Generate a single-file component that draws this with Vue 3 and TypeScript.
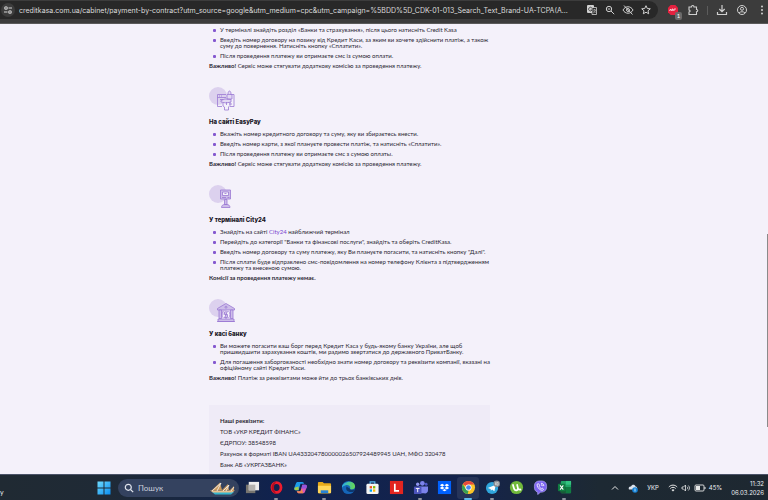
<script setup lang="ts">
interface Item {
  text: string
  link?: string
  rest?: string
}
interface Section {
  icon?: string
  title?: string
  items: Item[]
  strong: string
  note?: string
}

const address =
  'creditkasa.com.ua/cabinet/payment-by-contract?utm_source=google&utm_medium=cpc&utm_campaign=%5BDD%5D_CDK-01-013_Search_Text_Brand-UA-TCPA(A...'

const sections: Section[] = [
  {
    items: [
      { text: 'У терміналі знайдіть розділ «Банки та страхування», після цього натисніть Credit Kasa' },
      { text: 'Введіть номер договору на позику від Кредит Каси, за яким ви хочете здійснити платіж, а також\nсуму до повернення. Натисніть кнопку «Сплатити».' },
      { text: 'Після проведення платежу ви отримаєте смс із сумою оплати.' },
    ],
    strong: 'Важливо!',
    note: ' Сервіс може стягувати додаткову комісію за проведення платежу.',
  },
  {
    icon: 'online',
    title: 'На сайті EasyPay',
    items: [
      { text: 'Вкажіть номер кредитного договору та суму, яку ви збираєтесь внести.' },
      { text: 'Введіть номер карти, з якої плануєте провести платіж, та натисніть «Сплатити».' },
      { text: 'Після проведення платежу ви отримаєте смс з сумою оплаты.' },
    ],
    strong: 'Важливо!',
    note: ' Сервіс може стягувати додаткову комісію за проведення платежу.',
  },
  {
    icon: 'terminal',
    title: 'У терміналі City24',
    items: [
      { text: 'Знайдіть на сайті ', link: 'City24', rest: ' найближчий термінал' },
      { text: 'Перейдіть до категорії "Банки та фінансові послуги", знайдіть та оберіть CreditKasa.' },
      { text: 'Введіть номер договору та суму платежу, яку Ви плануєте погасити, та натисніть кнопку "Далі".' },
      { text: 'Після сплати буде відправлено смс-повідомлення на номер телефону Клієнта з підтвердженням\nплатежу та внесеною сумою.' },
    ],
    strong: 'Комісії за проведення платежу немає.',
  },
  {
    icon: 'bank',
    title: 'У касі банку',
    items: [
      { text: 'Ви можете погасити ваш борг перед Кредит Каса у будь-якому банку України, але щоб\nпришвидшити зарахування коштів, ми радимо звертатися до державного ПриватБанку.' },
      { text: 'Для погашення заборгованості необхідно знати номер договору та реквізити компанії, вказані на\nофіційному сайті Кредит Каси.' },
    ],
    strong: 'Важливо!',
    note: ' Платіж за реквізитами може йти до трьох банківських днів.',
  },
]

const details: string[] = [
  'ТОВ «УКР КРЕДИТ ФІНАНС»',
  'ЄДРПОУ: 38548598',
  'Рахунок в форматі IBAN UA433204780000026507924489945 UAH, МФО 320478',
  'Банк АБ «УКРГАЗБАНК»',
]
</script>

<template>
  <div class="screen">
    <header class="toolbar">
      <div class="omnibox">
        <button class="site" aria-label="Site information">
          <svg viewBox="0 0 14 14" width="14" height="14" fill="none" stroke="#d6d6d6" stroke-width="1.1">
            <circle cx="5" cy="5" r="1.3" /><path d="M7.5 5H11M3 9h3.5" /><circle cx="9" cy="9" r="1.3" />
          </svg>
        </button>
        <input class="url" :value="address" aria-label="Address" readonly />
        <button class="tool" aria-label="Translate">
          <svg viewBox="0 0 12 12" width="12" height="12">
            <rect x="1" y="1" width="7" height="8" rx="1" fill="#d0d0d0" />
            <path d="M6 3.5h4.5v7H6z" fill="#282828" stroke="#d0d0d0" stroke-width=".8" />
            <path d="M6 4.3A1.8 1.8 0 1 0 6 6H4.6" fill="none" stroke="#333" stroke-width=".8" />
            <path d="M7 6h3M8.5 5v1M7.2 9c1.5-.8 2-1.6 2.1-3M7.6 7l2 2" fill="none" stroke="#d0d0d0" stroke-width=".6" />
          </svg>
        </button>
        <button class="tool" aria-label="Zoom">
          <svg viewBox="0 0 12 12" width="12" height="12" fill="none" stroke="#d0d0d0" stroke-width="1">
            <circle cx="5" cy="5" r="2.7" /><path d="M7 7l3.2 3.2M3.8 5h2.4" />
          </svg>
        </button>
        <button class="tool" aria-label="Third-party cookies blocked">
          <svg viewBox="0 0 12 12" width="12" height="12" fill="none" stroke="#d0d0d0" stroke-width="1">
            <path d="M1 6c2.2-4.3 7.8-4.3 10 0-2.200 4.300-7.800 4.300-10 0z" /><circle cx="6" cy="6" r="1.500" /><path d="M2 1.500l8.500 9" />
          </svg>
        </button>
        <button class="tool" aria-label="Bookmark">
          <svg viewBox="0 0 12 12" width="12" height="12" fill="none" stroke="#d0d0d0" stroke-width="1">
            <path d="M6 1.700l1.300 2.800 3 .3-2.300 2 .7 3L6 8.200 3.300 9.800l.7-3-2.300-2 3-.3z" />
          </svg>
        </button>
      </div>
      <div class="actions">
        <button class="tool ext" aria-label="Blocker">
          <svg viewBox="0 0 12 12" width="12" height="12">
            <path d="M3.700 1h4.600L11 3.700v4.600L8.300 11H3.700L1 8.300V3.700z" fill="#e5213f" />
            <path d="M2.500 7l1-2 1 2M5 7V5h1v2M7 7V5h2" fill="none" stroke="#fff" stroke-width=".7" />
          </svg>
          <span class="badge">1</span>
        </button>
        <button class="tool" aria-label="Extensions">
          <svg viewBox="0 0 12 12" width="12" height="12" fill="none" stroke="#d0d0d0" stroke-width="1.100">
            <path d="M2 3h2.500c0-2 2.500-2 2.500 0h2.500v2.500c1.700 0 1.700 2.200 0 2.200v2.800H2V8c1.500 0 1.500-2 0-2z" />
          </svg>
        </button>
        <span class="divider"></span>
        <button class="tool" aria-label="Downloads">
          <svg viewBox="0 0 12 12" width="12" height="12" fill="none" stroke="#d0d0d0" stroke-width="1.200">
            <path d="M6 1v6.500M3.300 5L6 7.700 8.700 5M1.500 8v2.500h9V8" />
          </svg>
        </button>
        <button class="tool" aria-label="Profile">
          <svg viewBox="0 0 12 12" width="12" height="12" fill="none" stroke="#d0d0d0" stroke-width="1">
            <circle cx="6" cy="6" r="4.500" /><circle cx="6" cy="4.800" r="1.500" /><path d="M3 9c1.500-1.700 4.500-1.700 6 0" />
          </svg>
        </button>
        <button class="tool" aria-label="Menu">
          <svg viewBox="0 0 12 12" width="12" height="12" fill="#d0d0d0">
            <circle cx="6" cy="2.500" r="1" /><circle cx="6" cy="6" r="1" /><circle cx="6" cy="9.500" r="1" />
          </svg>
        </button>
      </div>
    </header>

    <main class="page">
      <div class="column">
        <section v-for="(s, i) in sections" :key="i" class="method">
          <svg v-if="s.icon" class="picture" viewBox="0 0 28 24" fill="none" stroke="#9a78d3" stroke-width=".8">
            <circle cx="9" cy="9" r="9" fill="#dcd1ee" stroke="none" />
            <g v-if="s.icon === 'online'">
              <path d="M13 19.500H8.500V7.500H17M21 7.500h4v12h-4M8.500 10.500H17M10 9h1m1 0h1" />
              <path d="M18 12V7.500h5V12zM19 7c0-4 3-4 3 0M12 13.500l4-1.500 6 .5v2.500l-5 1-5-1zM11 12.500h3M20 17h3" fill="#e3d9f3" />
              <path d="M14 16v3l1.500 1v3h4v-3l1.500-1.500V15M17.500 15v3" />
            </g>
            <g v-else-if="s.icon === 'terminal'" fill="#cdbde9">
              <path d="M11.500 5h10v9h-10z" /><path d="M13.500 7h6v3.500h-6z" fill="#f4f1fa" /><path d="M13 12.500h4m1.500 0h2M15.500 8.500h2" />
              <path d="M15.500 14.500h2.500v5h-2.500zM12.500 22.500c0-2 1.500-3 3-3h2.500c1.500 0 3 1 3 3z" />
            </g>
            <g v-else>
              <path d="M8.500 9.500L17 4.500l8.500 5v1.500h-17z" fill="#cdbde9" />
              <path d="M10 11h2.500v8.500H10zM21.500 11H24v8.500h-2.500zM9 20h16v2.500H9zM8 22.500h18" fill="#cdbde9" />
              <circle cx="17" cy="8.200" r="1" />
              <path d="M14.500 12c-2 1.500-2 5.500 0 7m5-7c2 1.500 2 5.500 0 7M15.500 13v2.500h3v3h-3M18.500 12l-3 7M17 12v8" />
            </g>
          </svg>
          <h2 v-if="s.title">{{ s.title }}</h2>
          <ul>
            <li v-for="(it, n) in s.items" :key="n">{{ it.text }}<a v-if="it.link" href="#">{{ it.link }}</a>{{ it.rest }}</li>
          </ul>
          <p><strong>{{ s.strong }}</strong>{{ s.note }}</p>
        </section>
        <aside class="details">
          <p><strong>Наші реквізити:</strong></p>
          <p v-for="d in details" :key="d">{{ d }}</p>
        </aside>
      </div>
      <span class="thumb"></span>
    </main>

    <footer class="taskbar">
      <div class="widget">у</div>
      <nav class="apps" aria-label="Taskbar">
        <button class="start" aria-label="Start">
          <svg viewBox="0 0 14 14" width="14" height="14">
            <defs><linearGradient id="win" x2="1" y2="1"><stop stop-color="#6edbff" /><stop offset="1" stop-color="#0a8df0" /></linearGradient></defs>
            <path d="M.5.500h6v6h-6zM7.500.500h6v6h-6zM.5 7.500h6v6h-6zM7.500 7.500h6v6h-6z" fill="url(#win)" />
          </svg>
        </button>
        <label class="search">
          <svg viewBox="0 0 10 10" width="10" height="10" fill="none" stroke="#dfe3ec" stroke-width="1.200">
            <circle cx="4.300" cy="4.300" r="3" /><path d="M6.500 6.500L9.200 9.200" />
          </svg>
          <input type="text" placeholder="Пошук" aria-label="Пошук" />
          <svg viewBox="0 0 28 14" width="28" height="14">
            <path d="M3 11h22l-3 2.500H6z" fill="#35b5cf" /><path d="M1 9.500h25l-3 2H4z" fill="#e8c08e" />
            <path d="M2 10L11 1.500 13 9zM12 10l7-7 1 6zM20 10L25 5v5z" fill="#c9995c" />
            <path d="M3 10l9-8-4 8M14 10l6-6-3 6M22 10l3-4" stroke="#f0ebe8" stroke-width=".9" fill="none" />
          </svg>
        </label>
        <button class="app" aria-label="Task view">
          <svg viewBox="0 0 16 16"><rect x="1" y="5" width="10" height="9" fill="#77756f" /><rect x="4" y="2" width="11" height="9" fill="#eee" /><path d="M4 5h7v6H4z" fill="#b4b2af" /></svg>
        </button>
        <button class="app run" aria-label="Opera">
          <svg viewBox="0 0 16 16"><ellipse cx="8" cy="8" rx="4.800" ry="5.200" fill="none" stroke="#ec1c2e" stroke-width="3" /><path d="M8 1.500c-7 1-7 12 0 13-3.500-3-3.500-10 0-13z" fill="#b40d20" /></svg>
        </button>
        <button class="app" aria-label="Copilot">
          <svg viewBox="0 0 16 16">
            <path d="M5 2h5c1 0 1.500 1 2 2H8L6 11H3c-2 0-2-2-1.500-3L3 4c.4-1.300 1-2 2-2z" fill="#1c9bea" />
            <path d="M2 8l4-1v4H3c-1.500 0-2-1.500-1-3z" fill="#a5ce4c" />
            <path d="M11 14H6c-1 0-1.500-1-2-2h4l2-7h3c2 0 2 2 1.500 3L13 12c-.4 1.300-1 2-2 2z" fill="#da58b4" />
            <path d="M10 5h3c2 0 2 2 1.500 3L14 9H9z" fill="#9256dc" /><path d="M4 12h4l1-3 2 5H6c-1 0-1.500-1-2-2z" fill="#f28a4e" />
          </svg>
        </button>
        <button class="app run" aria-label="File Explorer">
          <svg viewBox="0 0 16 16"><path d="M1 3q0-1 1-1h4l1.500 1.500H14q1 0 1 1V13q0 1-1 1H2q-1 0-1-1z" fill="#e6a919" /><path d="M1 6h14v7q0 1-1 1H2q-1 0-1-1z" fill="#ffd65a" /><path d="M4 14v-3h8v3z" fill="#2784d8" /></svg>
        </button>
        <button class="app" aria-label="Edge">
          <svg viewBox="0 0 16 16">
            <defs><linearGradient id="edge" x2="1"><stop stop-color="#2aaee8" /><stop offset="1" stop-color="#68d94e" /></linearGradient></defs>
            <circle cx="8" cy="8" r="7" fill="#1565b8" /><path d="M1 8C1 1 15-1 15 7c0 3-4 4-5.500 2.500C11 7 8 4.500 5 5.500 3 6 1.500 7 1 8z" fill="url(#edge)" />
            <path d="M6 7c-2 4 2 7 7.500 5.500l1-3C13 11 9 10.500 9.500 9 8 8.500 7 8 6 7z" fill="#0d376f" />
          </svg>
        </button>
        <button class="app" aria-label="Microsoft Store">
          <svg viewBox="0 0 16 16"><path d="M5.500 5V2h5v3" fill="none" stroke="#56b7ed" stroke-width="1.200" /><rect x="1.500" y="4" width="13" height="11" rx="1.500" fill="#f4f4f4" /><path d="M5 6.500h2.500V9H5z" fill="#f25022" /><path d="M8.500 6.500H11V9H8.500z" fill="#7fba00" /><path d="M5 10h2.500v2.500H5z" fill="#00a4ef" /><path d="M8.500 10H11v2.500H8.500z" fill="#ffb900" /></svg>
        </button>
        <button class="app" aria-label="Liga">
          <svg viewBox="0 0 16 16"><path d="M1 1h14v14H1z" fill="#e22520" /><path d="M6.200 4v7.500h4.500" fill="none" stroke="#fff" stroke-width="1.800" /></svg>
        </button>
        <button class="app run" aria-label="Teams">
          <svg viewBox="0 0 16 16"><circle cx="10" cy="3.500" r="2.500" fill="#7b83eb" /><circle cx="14" cy="4.500" r="1.500" fill="#5059c9" /><path d="M6 7h10v4c0 3-3 4-4 3H6z" fill="#7b83eb" /><circle cx="5" cy="4.500" r="1.800" fill="#8f95f1" /><rect x="1" y="7" width="8" height="8" rx="1" fill="#4b53bc" /><path d="M3 9h4M5 9v4" stroke="#fff" stroke-width="1" /></svg>
        </button>
        <button class="app" aria-label="Dropbox">
          <svg viewBox="0 0 16 16"><path d="M1 1h14v14H1z" fill="#0061fe" /><path d="M5.500 4L8 5.500 5.500 7 3 5.500zM10.500 4L13 5.500 10.500 7 8 5.500zM5.500 7L8 8.500 5.500 10 3 8.500zM10.500 7L13 8.500 10.500 10 8 8.500zM8 9.500l2.200 1.300L8 12l-2.200-1.200z" fill="#fff" /></svg>
        </button>
        <button class="app run active" aria-label="Chrome">
          <svg viewBox="0 0 16 16"><circle cx="8" cy="8" r="7" fill="#fbc116" /><path d="M8 8L2 4.400A7 7 0 0 1 14.100 4.700H8z" fill="#e33b2e" /><path d="M1.940 4.500L5.200 9.700 8 11.300 7.200 15A7 7 0 0 1 1.940 4.500z" fill="#279847" /><circle cx="8" cy="8" r="3.300" fill="#fff" /><circle cx="8" cy="8" r="2.500" fill="#3b7ded" /></svg>
        </button>
        <button class="app run" aria-label="Telegram">
          <svg viewBox="0 0 16 16"><circle cx="7.500" cy="8.500" r="6.500" fill="#2fa5dc" /><path d="M3 8.500L11.500 5 10 12 7.500 10.200 6.300 11.500 6 9.500z" fill="#fff" /><circle cx="12.500" cy="4" r="3.500" fill="#858a90" /><path d="M11.200 2.500v3M12.500 2.500h1.500v3h-1.500z" fill="none" stroke="#e6e6e6" stroke-width=".7" /></svg>
        </button>
        <button class="app" aria-label="uTorrent">
          <svg viewBox="0 0 16 16"><circle cx="8" cy="8" r="7" fill="#71b83b" /><path d="M4 4.500l1.500 5c1 2.500 4.500 2 4-1L8.500 4.500M9.500 9c1 1.500 2 1.500 3.500 1" fill="none" stroke="#fff" stroke-width="1.800" /></svg>
        </button>
        <button class="app" aria-label="Viber">
          <svg viewBox="0 0 16 16"><path d="M8 1c5 0 6.500 2 6.500 6s-2 6-6.500 6l-3 2.500V13C2 12 1.500 10 1.500 7c0-4 1.500-6 6.500-6z" fill="#7d66f1" stroke="#b9adfa" stroke-width=".7" /><path d="M5 4c-2 1 1 7 5 7 1.500-.5 1.500-1.500 0-2.200L9 9.300C7.500 8.500 7 7.800 6.500 6.700L7 5.800C6.500 4.500 6 3.500 5 4zM8.500 3.500c2 0 3 1.200 3 3M8.500 5c1 0 1.500.6 1.500 1.500" fill="none" stroke="#fff" stroke-width=".9" /></svg>
        </button>
        <button class="app run" aria-label="Excel">
          <svg viewBox="0 0 16 16"><rect x="4" y="1" width="11" height="13" rx="1" fill="#21a366" /><path d="M4 7.500h5.500V14H4z" fill="#185c37" /><path d="M9.500 1H15v4H9.500z" fill="#33c481" /><path d="M9.500 7.500H15V14H9.500z" fill="#107c41" /><rect x="1" y="4" width="8" height="8" rx="1" fill="#107c41" /><path d="M3.300 5.800l3.400 4.400M6.700 5.800l-3.400 4.400" stroke="#fff" stroke-width="1.100" /></svg>
        </button>
      </nav>
      <div class="tray">
        <button aria-label="Hidden icons"><svg viewBox="0 0 8 8" width="8" height="8" fill="none" stroke="#e8e8e8"><path d="M1 5.500L4 2.500l3 3" /></svg></button>
        <button aria-label="OneDrive"><svg viewBox="0 0 10 10" width="10" height="10"><path d="M1 6.500C0 4 2 3.500 3 3.500c1-2.500 4-2 4.500 0 1.500 0 2 1.500 1.500 3z" fill="#dde4ed" /><circle cx="7" cy="7" r="2.800" fill="#1683d8" /><path d="M7 5.500v3" stroke="#fff" stroke-width=".7" /></svg></button>
        <button class="lang">УКР</button>
        <button class="status" aria-label="Network, volume, battery">
          <svg viewBox="0 0 10 10" width="10" height="10" fill="none" stroke="#e8e8e8"><path d="M.8 4c2.400-2.500 6-2.500 8.400 0M2.300 5.500c1.500-1.600 3.900-1.600 5.400 0" /><path d="M3.500 7c.8-1 2.200-1 3 0L5 8.500z" fill="#e8e8e8" stroke="none" /></svg>
          <svg viewBox="0 0 10 10" width="10" height="10" fill="none" stroke="#e8e8e8" stroke-width=".8"><path d="M1 4h1.500L4.500 2v6L2.500 6H1zM6 3.700c.8.800.8 1.800 0 2.600M7.300 2.500c1.500 1.500 1.500 3.500 0 5" /></svg>
          <svg viewBox="0 0 12 10" width="12" height="10"><rect x="1" y="2" width="9" height="6" rx="1" fill="none" stroke="#e8e8e8" stroke-width=".9" /><path d="M2 3h4v4H2zM10.500 4h1v2h-1z" fill="#e8e8e8" /></svg>
          <span>45%</span>
        </button>
        <time class="clock"><span>11:32</span><span>06.03.2026</span></time>
      </div>
    </footer>
  </div>
</template>

<style>
body {
  margin: 0;
}
</style>

<style scoped>
* {
  box-sizing: border-box;
}
.screen {
  display: flex;
  flex-direction: column;
  height: 100vh;
  overflow: hidden;
  font-family: Lato, "Noto Sans", sans-serif;
}
button {
  display: flex;
  align-items: center;
  justify-content: center;
  margin: 0;
  padding: 0;
  border: 0;
  background: none;
  color: inherit;
  font: inherit;
}
input {
  min-width: 0;
  padding: 0;
  border: 0;
  outline: 0;
  background: none;
  font: inherit;
  color: inherit;
}
svg {
  display: block;
  flex: none;
}
.toolbar {
  display: flex;
  align-items: center;
  flex: none;
  height: 24px;
  padding-bottom: 3px;
  background: #3c3c3c;
  border-bottom: 1px solid #5a5a5a;
}
.omnibox {
  display: flex;
  align-items: center;
  gap: 6px;
  flex: 1;
  height: 18px;
  padding: 0 6px 0 1px;
  border-radius: 0 9px 9px 0;
  background: #282828;
  color: #dcdcdc;
  font-family: Inter, sans-serif;
  font-size: 7px;
}
.site {
  width: 14px;
  height: 14px;
  border-radius: 50%;
  background: #3c3c3c;
}
.url {
  flex: 1;
  margin-left: -2px;
  height: 16px;
}
.tool {
  position: relative;
  width: 12px;
  height: 12px;
}
.actions {
  display: flex;
  align-items: center;
  gap: 8px;
  padding-left: 9px;
}
.badge {
  position: absolute;
  right: -3px;
  bottom: -4px;
  width: 7px;
  height: 8px;
  border-radius: 2px;
  background: #6a6a6a;
  color: #fff;
  font-size: 6px;
  line-height: 8px;
}
.divider {
  width: 1px;
  height: 9px;
  background: #5c5c5c;
}
.page {
  position: relative;
  display: grid;
  grid-template-columns: 209fr 281fr 278fr;
  flex: 1;
  min-height: 0;
  overflow: hidden;
  background: #f4f1fa;
  color: #2b2833;
  font-size: 6px;
  line-height: 6px;
}
.column {
  grid-column: 2;
  min-width: 0;
  padding-top: 3px;
}
.method {
  margin-bottom: 18px;
}
.picture {
  width: 28px;
  height: 24px;
}
h2 {
  margin: 7px 0 5px;
  color: #18151f;
  font-family: Inter, sans-serif;
  font-size: 6px;
  line-height: 8px;
  font-weight: 800;
}
ul {
  margin: 0;
  padding: 0;
  list-style: none;
}
li {
  position: relative;
  margin-bottom: 4px;
  padding-left: 11px;
  white-space: pre;
}
li::before {
  content: "";
  position: absolute;
  left: 4px;
  top: 2px;
  width: 3px;
  height: 3px;
  border-radius: 1px;
  background: #8458cf;
}
a {
  color: #7a46d0;
  text-decoration: none;
}
p {
  margin: 0;
  white-space: pre;
}
.details {
  display: grid;
  gap: 5px;
  margin-top: 24px;
  padding: 13px 11px;
  background: #efebf7;
}
.thumb {
  position: absolute;
  right: 0;
  top: 210px;
  width: 1px;
  height: 193px;
  background: #8a8a8a;
}
.taskbar {
  display: grid;
  grid-template-columns: 97fr auto 192fr;
  align-items: center;
  flex: none;
  height: 26px;
  border-top: 1px solid #4b5368;
  background: linear-gradient(90deg, #202a33 0%, #1f2a36 14%, #10224e 36%, #14234c 60%, #1d2933 78%, #1e2831 100%);
  color: #eceef2;
}
.widget {
  align-self: end;
  padding-bottom: 3px;
  font-size: 7px;
  line-height: 9px;
}
.apps {
  display: flex;
  align-items: center;
}
.start {
  width: 14px;
  margin-right: 7px;
}
.search {
  display: flex;
  align-items: center;
  gap: 4px;
  width: 121px;
  height: 18px;
  margin-right: 1px;
  padding: 0 2px 0 6px;
  border-radius: 9px;
  background: #34425f;
  font-size: 8px;
}
.search input {
  flex: 1;
}
.search input::placeholder {
  color: #c9cfdb;
}
.app {
  position: relative;
  width: 24px;
  height: 24px;
}
.app svg {
  width: 15px;
  height: 15px;
}
.active::after {
  content: "";
  position: absolute;
  z-index: 0;
  inset: 1px;
  border-radius: 3px;
  background: rgba(255, 255, 255, 0.08);
}
.run::before {
  content: "";
  position: absolute;
  bottom: 0;
  left: 10px;
  width: 4px;
  height: 2px;
  border-radius: 1px;
  background: #8e949f;
}
.active::before {
  left: 8px;
  width: 8px;
  background: #58b9ee;
}
.tray {
  display: flex;
  align-items: center;
  justify-content: flex-end;
  gap: 9px;
  padding-right: 4px;
  font-family: Inter, sans-serif;
  font-size: 6px;
}
.status {
  gap: 3px;
}
.clock {
  display: flex;
  flex-direction: column;
  align-items: flex-end;
  line-height: 9px;
}
</style>
